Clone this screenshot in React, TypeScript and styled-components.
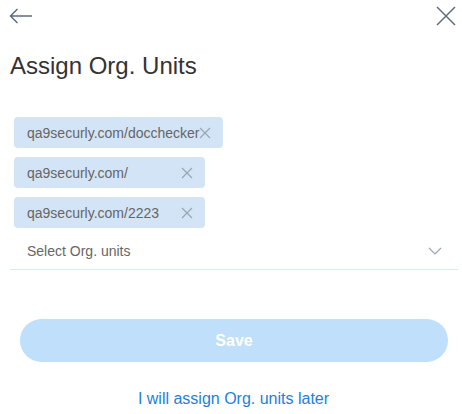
import React from 'react'
import styled, { createGlobalStyle } from 'styled-components'

const GlobalStyle = createGlobalStyle`
  html, body {
    margin: 0;
    padding: 0;
    background: #ffffff;
    font-family: Arial, "Liberation Sans", sans-serif;
  }
`

const Panel = styled.div`
  width: 462px;
  height: 414px;
  box-sizing: border-box;
  display: flex;
  flex-direction: column;
  background: #fff;
`

const TopBar = styled.div`
  display: flex;
  justify-content: space-between;
  align-items: center;
  height: 32px;
  padding: 0 6px 0 9px;
`

const IconButton = styled.button`
  display: flex;
  align-items: center;
  justify-content: center;
  padding: 0;
  border: none;
  background: none;
  color: #5d6d7e;
  cursor: pointer;
`

const Title = styled.h1`
  margin: 20px 0 0 10px;
  font-weight: 400;
  font-size: 24px;
  line-height: 28px;
  color: #333;
`

const ChipList = styled.div`
  display: flex;
  flex-direction: column;
  align-items: flex-start;
  gap: 9px;
  margin: 37px 0 0 14px;
`

const Chip = styled.div`
  display: flex;
  align-items: center;
  height: 31px;
  padding: 0 12px 0 13px;
  border-radius: 4px;
  background: #d3e4f7;
  font-size: 14px;
  color: #666;
`

const ChipLabel = styled.span`
  min-width: 154px;
`

const ChipRemove = styled.button`
  display: flex;
  padding: 0;
  border: none;
  background: none;
  color: #9aa6b2;
  cursor: pointer;
`

const SelectRow = styled.div`
  display: flex;
  align-items: center;
  justify-content: space-between;
  margin: 0 4px 0 10px;
  padding: 15px 16px 10px 17px;
  line-height: 16px;
  border-bottom: 1px solid #d6e7f7;
  font-size: 14px;
  color: #666;
`

const Chevron = styled.span`
  display: flex;
  color: #9aa6b2;
`

const SaveButton = styled.button`
  margin: 49px 14px 0 20px;
  height: 43px;
  border: none;
  border-radius: 22px;
  background: #bfdffb;
  color: #fff;
  font-family: inherit;
  font-size: 16px;
  font-weight: 700;
`

const LaterLink = styled.a`
  margin-top: 28px;
  align-self: center;
  margin-left: 5px;
  font-size: 16px;
  color: #1e80db;
  text-decoration: none;
  cursor: pointer;
`

const XIcon = ({ size, stroke }: { size: number; stroke: number }) => (
  <svg width={size} height={size} viewBox="0 0 12 12" fill="none">
    <path d="M1 1L11 11M11 1L1 11" stroke="currentColor" strokeWidth={stroke} />
  </svg>
)

const units = [
  { label: 'qa9securly.com/docchecker' },
  { label: 'qa9securly.com/' },
  { label: 'qa9securly.com/2223' },
]

export default function App() {
  return (
    <>
      <GlobalStyle />
      <Panel>
        <TopBar>
          <IconButton aria-label="Back">
            <svg width="24" height="16" viewBox="0 0 24 16" fill="none">
              <path d="M1.5 8H23M8.5 1L1.5 8L8.5 15" stroke="currentColor" strokeWidth="1.5" />
            </svg>
          </IconButton>
          <IconButton aria-label="Close">
            <svg width="20" height="20" viewBox="0 0 20 20" fill="none">
              <path d="M1 1L19 19M19 1L1 19" stroke="currentColor" strokeWidth="1.5" />
            </svg>
          </IconButton>
        </TopBar>
        <Title>Assign Org. Units</Title>
        <ChipList>
          {units.map((u) => (
            <Chip key={u.label}>
              <ChipLabel>{u.label}</ChipLabel>
              <ChipRemove aria-label="Remove">
                <XIcon size={12} stroke={1.2} />
              </ChipRemove>
            </Chip>
          ))}
        </ChipList>
        <SelectRow>
          <span>Select Org. units</span>
          <Chevron>
            <svg width="14" height="8" viewBox="0 0 14 8" fill="none">
              <path d="M1 1L7 7L13 1" stroke="currentColor" strokeWidth="1.2" />
            </svg>
          </Chevron>
        </SelectRow>
        <SaveButton>Save</SaveButton>
        <LaterLink>I will assign Org. units later</LaterLink>
      </Panel>
    </>
  )
}
